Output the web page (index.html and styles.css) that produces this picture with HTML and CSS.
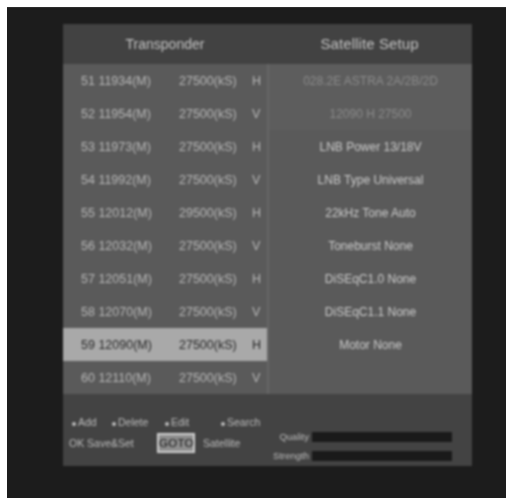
FILE: index.html
```html
<!DOCTYPE html>
<html lang="en">
<head>
  <meta charset="UTF-8" />
  <title>Transponder</title>
  <link rel="stylesheet" href="styles.css">
</head>
<body>
  <div class="screen">
    <div class="panel">
      <div class="columns">
        <!-- transponder list -->
        <div class="col-left">
          <div class="head">Transponder</div>
          <div class="row"><span class="freq">51 11934(M)</span><span class="rate">27500(kS)</span><span class="pol">H</span></div>
          <div class="row"><span class="freq">52 11954(M)</span><span class="rate">27500(kS)</span><span class="pol">V</span></div>
          <div class="row"><span class="freq">53 11973(M)</span><span class="rate">27500(kS)</span><span class="pol">H</span></div>
          <div class="row"><span class="freq">54 11992(M)</span><span class="rate">27500(kS)</span><span class="pol">V</span></div>
          <div class="row"><span class="freq">55 12012(M)</span><span class="rate">29500(kS)</span><span class="pol">H</span></div>
          <div class="row"><span class="freq">56 12032(M)</span><span class="rate">27500(kS)</span><span class="pol">V</span></div>
          <div class="row"><span class="freq">57 12051(M)</span><span class="rate">27500(kS)</span><span class="pol">H</span></div>
          <div class="row"><span class="freq">58 12070(M)</span><span class="rate">27500(kS)</span><span class="pol">V</span></div>
          <div class="row selected"><span class="freq">59 12090(M)</span><span class="rate">27500(kS)</span><span class="pol">H</span></div>
          <div class="row"><span class="freq">60 12110(M)</span><span class="rate">27500(kS)</span><span class="pol">V</span></div>
        </div>
        <!-- satellite setup -->
        <div class="col-right">
          <div class="head">Satellite Setup</div>
          <div class="row dim">028.2E ASTRA 2A/2B/2D</div>
          <div class="row dim">12090 H 27500</div>
          <div class="row">LNB Power 13/18V</div>
          <div class="row">LNB Type Universal</div>
          <div class="row">22kHz Tone Auto</div>
          <div class="row">Toneburst None</div>
          <div class="row">DiSEqC1.0 None</div>
          <div class="row">DiSEqC1.1 None</div>
          <div class="row">Motor None</div>
          <div class="row"></div>
        </div>
      </div>
      <div class="footer">
        <div class="keys">
          <div class="keys-top">
            <span class="key key-add"><i class="dot"></i>Add</span>
            <span class="key key-delete"><i class="dot"></i>Delete</span>
            <span class="key key-edit"><i class="dot"></i>Edit</span>
            <span class="key"><i class="dot"></i>Search</span>
          </div>
          <div class="keys-bottom">
            <span class="key key-ok">OK Save&amp;Set</span>
            <span class="goto">GOTO</span>
            <span class="key">Satellite</span>
          </div>
        </div>
        <div class="gauges">
          <div class="gauge"><span>Quality</span><div class="bar"></div></div>
          <div class="gauge"><span>Strength</span><div class="bar"></div></div>
        </div>
      </div>
    </div>
  </div>
</body>
</html>
```

FILE: styles.css
```css
html, body {
  margin: 0;
  background: #fff;
}

body {
  height: 498px;
  overflow: hidden;
  font-family: "Liberation Sans", sans-serif;
}

.screen {
  box-sizing: border-box;
  height: 491px;
  margin: 7px 1px 0 7px;
  padding: 16px 34px 0 56px;
  background: #1c1c1c;
  border-top: 1px solid #2c2c2c;
}

.panel {
  width: 409px;
  filter: blur(1px);
}

.columns {
  display: flex;
}

.col-left {
  width: 204px;
}

.col-right {
  flex: 1;
  text-align: center;
  border-left: 2px solid #666;
}

.head {
  height: 40px;
  line-height: 40px;
  background: #424242;
  color: #c4c4c4;
  font-size: 14px;
  text-align: center;
}

.col-right .head {
  font-size: 15px;
  letter-spacing: 0.1px;
  margin-left: -2px;
}

.row {
  display: flex;
  align-items: center;
  height: 33px;
  background: #5a5a5a;
  color: #b8b8b8;
  font-size: 12.5px;
}

.col-left .row {
  padding-left: 18px;
}

.col-right .row {
  justify-content: center;
  font-size: 12px;
  color: #cccccc;
}

.col-right .dim {
  color: #8c8c8c;
  background: #5d5d5d;
}

.freq {
  width: 98px;
}

.rate {
  width: 73px;
}

.selected {
  background: #a9a9a9;
  color: #262626;
}

.footer {
  display: flex;
  justify-content: space-between;
  height: 72px;
  background: #434343;
  color: #bcbcbc;
  font-size: 10.5px;
}

.keys {
  padding: 22px 0 0 9px;
}

.keys-top,
.keys-bottom {
  display: flex;
  align-items: center;
}

.keys-bottom {
  margin: 5px 0 0 -3px;
}

.key-add {
  width: 40px;
}

.key-delete {
  width: 53px;
}

.key-edit {
  width: 56px;
}

.key-ok {
  width: 88px;
}

.dot {
  display: inline-block;
  width: 4px;
  height: 4px;
  margin-right: 2px;
  border-radius: 50%;
  background: #bcbcbc;
}

.goto {
  box-sizing: border-box;
  width: 38px;
  height: 20px;
  margin-right: 8px;
  line-height: 16px;
  text-align: center;
  font-size: 11.5px;
  letter-spacing: 0.3px;
  background: #8e8e8e;
  color: #111;
  border: 2px solid #cfcfcf;
}

.gauges {
  display: flex;
  flex-direction: column;
  gap: 8px;
  padding: 37px 20px 0 0;
  font-size: 9.5px;
}

.gauge {
  display: flex;
  align-items: center;
  justify-content: flex-end;
  gap: 3px;
}

.bar {
  width: 140px;
  height: 10px;
  background: #1a1a1a;
}
```
